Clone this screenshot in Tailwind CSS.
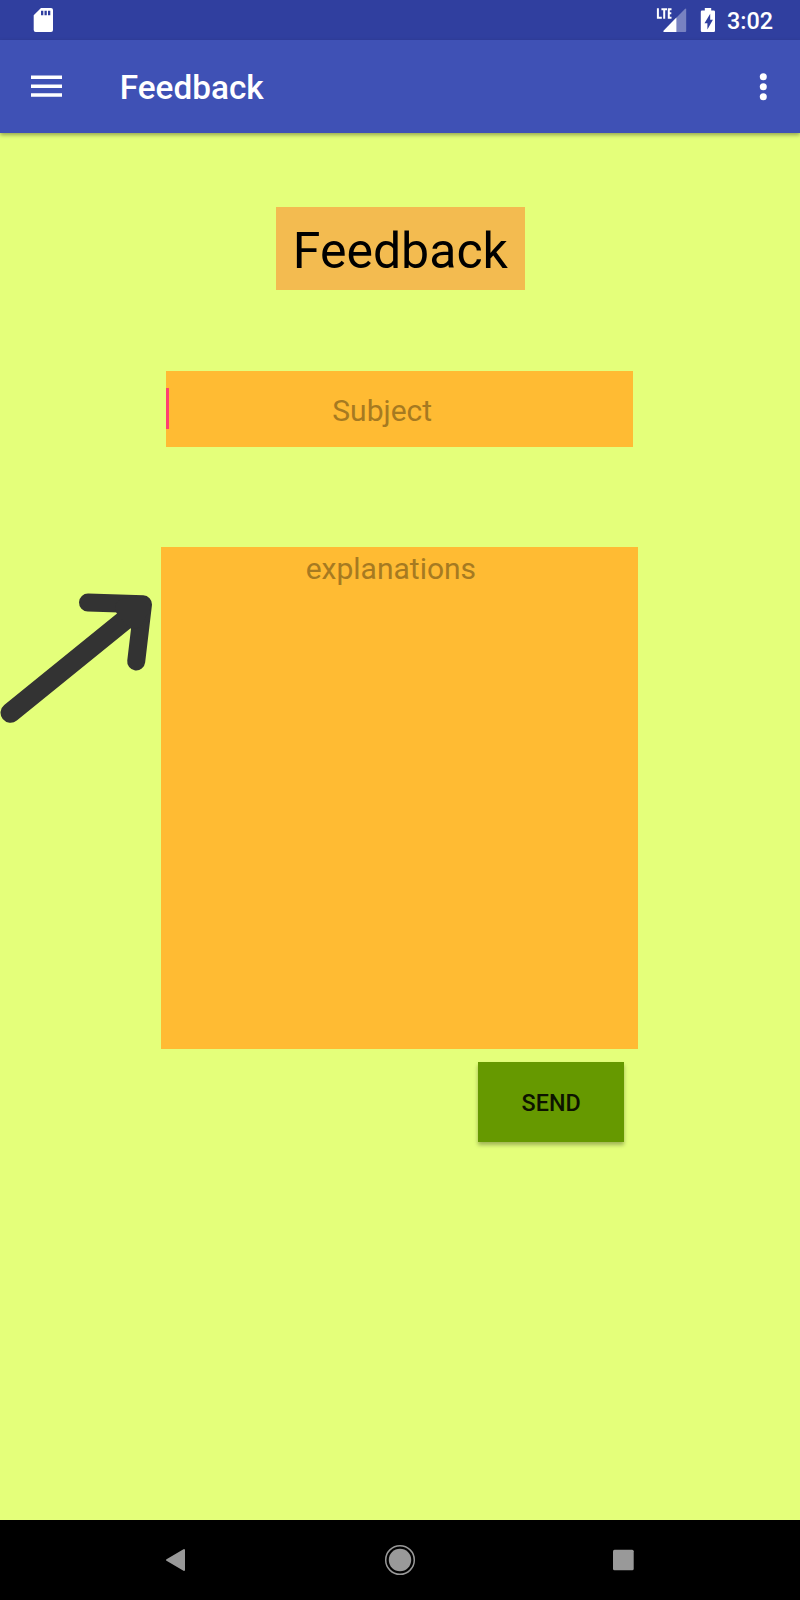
<!DOCTYPE html>
<html lang="en">
<head>
<meta charset="utf-8">
<meta name="viewport" content="width=device-width, initial-scale=1">
<title>Feedback</title>
<script src="https://cdn.jsdelivr.net/npm/@tailwindcss/browser@4"></script>
</head>
<body class="bg-[#e4ff7a] font-[Roboto,sans-serif]">
<div class="flex flex-col w-[800px] h-[1600px] overflow-hidden bg-[#e4ff7a]">
  <!-- Status bar -->
  <div class="flex justify-between h-10 shrink-0 bg-[#303f9f] text-white">
    <svg class="ml-[30px]" width="28" height="40" viewBox="30 0 28 40" fill="currentColor" fill-rule="evenodd"><path d="M41 8h10q2 0 2 2v20q0 2-2 2H35.700q-2 0-2-2V15.300zM41 10.700v4.600h2.300v-4.600zM44.500 10.700v4.600h2.300v-4.600zM48 10.700v4.600h2.300v-4.600z"/></svg>
    <div class="flex pr-[27px]">
      <svg width="36" height="40" viewBox="653.500 0 36 40">
        <path d="M685.700 9v22q0 1-1 1H663.500q-1.200-.200-.400-1.200L684.400 8.900q1.300-.900 1.300.1z" fill="#7882c1"/>
        <path d="M675.900 17.600V32h-12.400q-1.200-.2-.4-1.200z" fill="#fff"/>
        <path d="M657.400 8.300v9.400h3.900M660.900 9.300h5.600M663.700 9.300v9.400M671 9.300h-2.700v8.400h2.700M668.300 13.300h2.500" fill="none" stroke="#fff" stroke-width="2"/>
      </svg>
      <svg class="ml-[10px]" width="16" height="40" viewBox="699.500 0 16 40"><path fill="#fff" d="M704.300 10.500V8h6.400v2.500h2.600q1.200 0 1.200 1.200v19.100q0 1.200-1.200 1.200h-11.800q-1.200 0-1.200-1.200V11.700q0-1.200 1.200-1.200z"/><path fill="#303f9f" d="M709.700 13.800l-5.700 9.500h2.900v6.300l5.500-9.800h-2.700z"/></svg>
      <span class="ml-[11px] mt-px text-[23.4px] leading-10 font-medium">3:02</span>
    </div>
  </div>
  <!-- Toolbar -->
  <header class="flex h-[93px] shrink-0 bg-[#3f51b5] text-white shadow-[0_2px_4px_rgba(0,0,0,0.35)]">
    <svg class="ml-[30px]" width="34" height="93" viewBox="30 40 34 93" fill="currentColor"><path d="M31 75.500h31v3.500H31zM31 84.500h31v3.500H31zM31 93.300h31v3.500H31z"/></svg>
    <h1 class="ml-[55.700px] mt-px grow text-[33.33px] leading-[93px] font-medium">Feedback</h1>
    <svg class="mr-[25px]" width="24" height="93" viewBox="751 40 24 93" fill="currentColor"><circle cx="763.300" cy="76.700" r="3.500"/><circle cx="763.300" cy="86.700" r="3.500"/><circle cx="763.300" cy="96.700" r="3.500"/></svg>
  </header>
  <!-- Form -->
  <main class="flex flex-col grow">
    <h2 class="mt-[74px] ml-[275.700px] w-[249.300px] h-[83px] pt-[2px] bg-[#f3bb50] text-black text-center text-[50px] leading-[84px]">Feedback</h2>
    <div class="flex items-start mt-[81px] ml-[166px] w-[467px] h-[76px] bg-[#ffbb33] text-[30px]">
      <span class="mt-[17px] w-[3.300px] h-[41px] bg-[#ff4070]"></span>
      <span class="ml-[163px] mt-px leading-[77px] text-[#a67a21]">Subject</span>
    </div>
    <div class="flex items-start mt-[100px]">
      <svg class="mt-[40px]" width="161" height="145" viewBox="0 587 161 145" fill="none" stroke="#333" stroke-linecap="round" stroke-linejoin="round"><path d="M10.500 712.700L136 611" stroke-width="20"/><path d="M88 602.500L143 604.300L136.200 661.500" stroke-width="18"/><path d="M124 608L142 605L134 620Z" fill="#333" stroke-width="18"/></svg>
      <div class="w-[477px] h-[502px] pl-[144.700px] pt-[4px] bg-[#ffbb33] text-[#a67a21] text-[30px] leading-[36px]">explanations</div>
    </div>
    <button class="mt-[13px] ml-[478px] w-[146.300px] h-[80px] pt-[3px] bg-[#669900] text-[#0d1300] text-[23.33px] font-medium shadow-[0_3px_4px_rgba(0,0,0,0.3)]">SEND</button>
  </main>
  <!-- Navigation bar -->
  <nav class="flex h-20 shrink-0 bg-black text-[#999]">
    <svg width="800" height="80" viewBox="0 1520 800 80" fill="currentColor"><path d="M167 1560L184 1550V1570Z" stroke="currentColor" stroke-width="2" stroke-linejoin="round"/><circle cx="400" cy="1560" r="11.200"/><circle cx="400" cy="1560" r="14.300" fill="none" stroke="currentColor" stroke-width="1.500"/><rect x="613" y="1549.700" width="20.700" height="20.600" rx="1.500"/></svg>
  </nav>
</div>
</body>
</html>
